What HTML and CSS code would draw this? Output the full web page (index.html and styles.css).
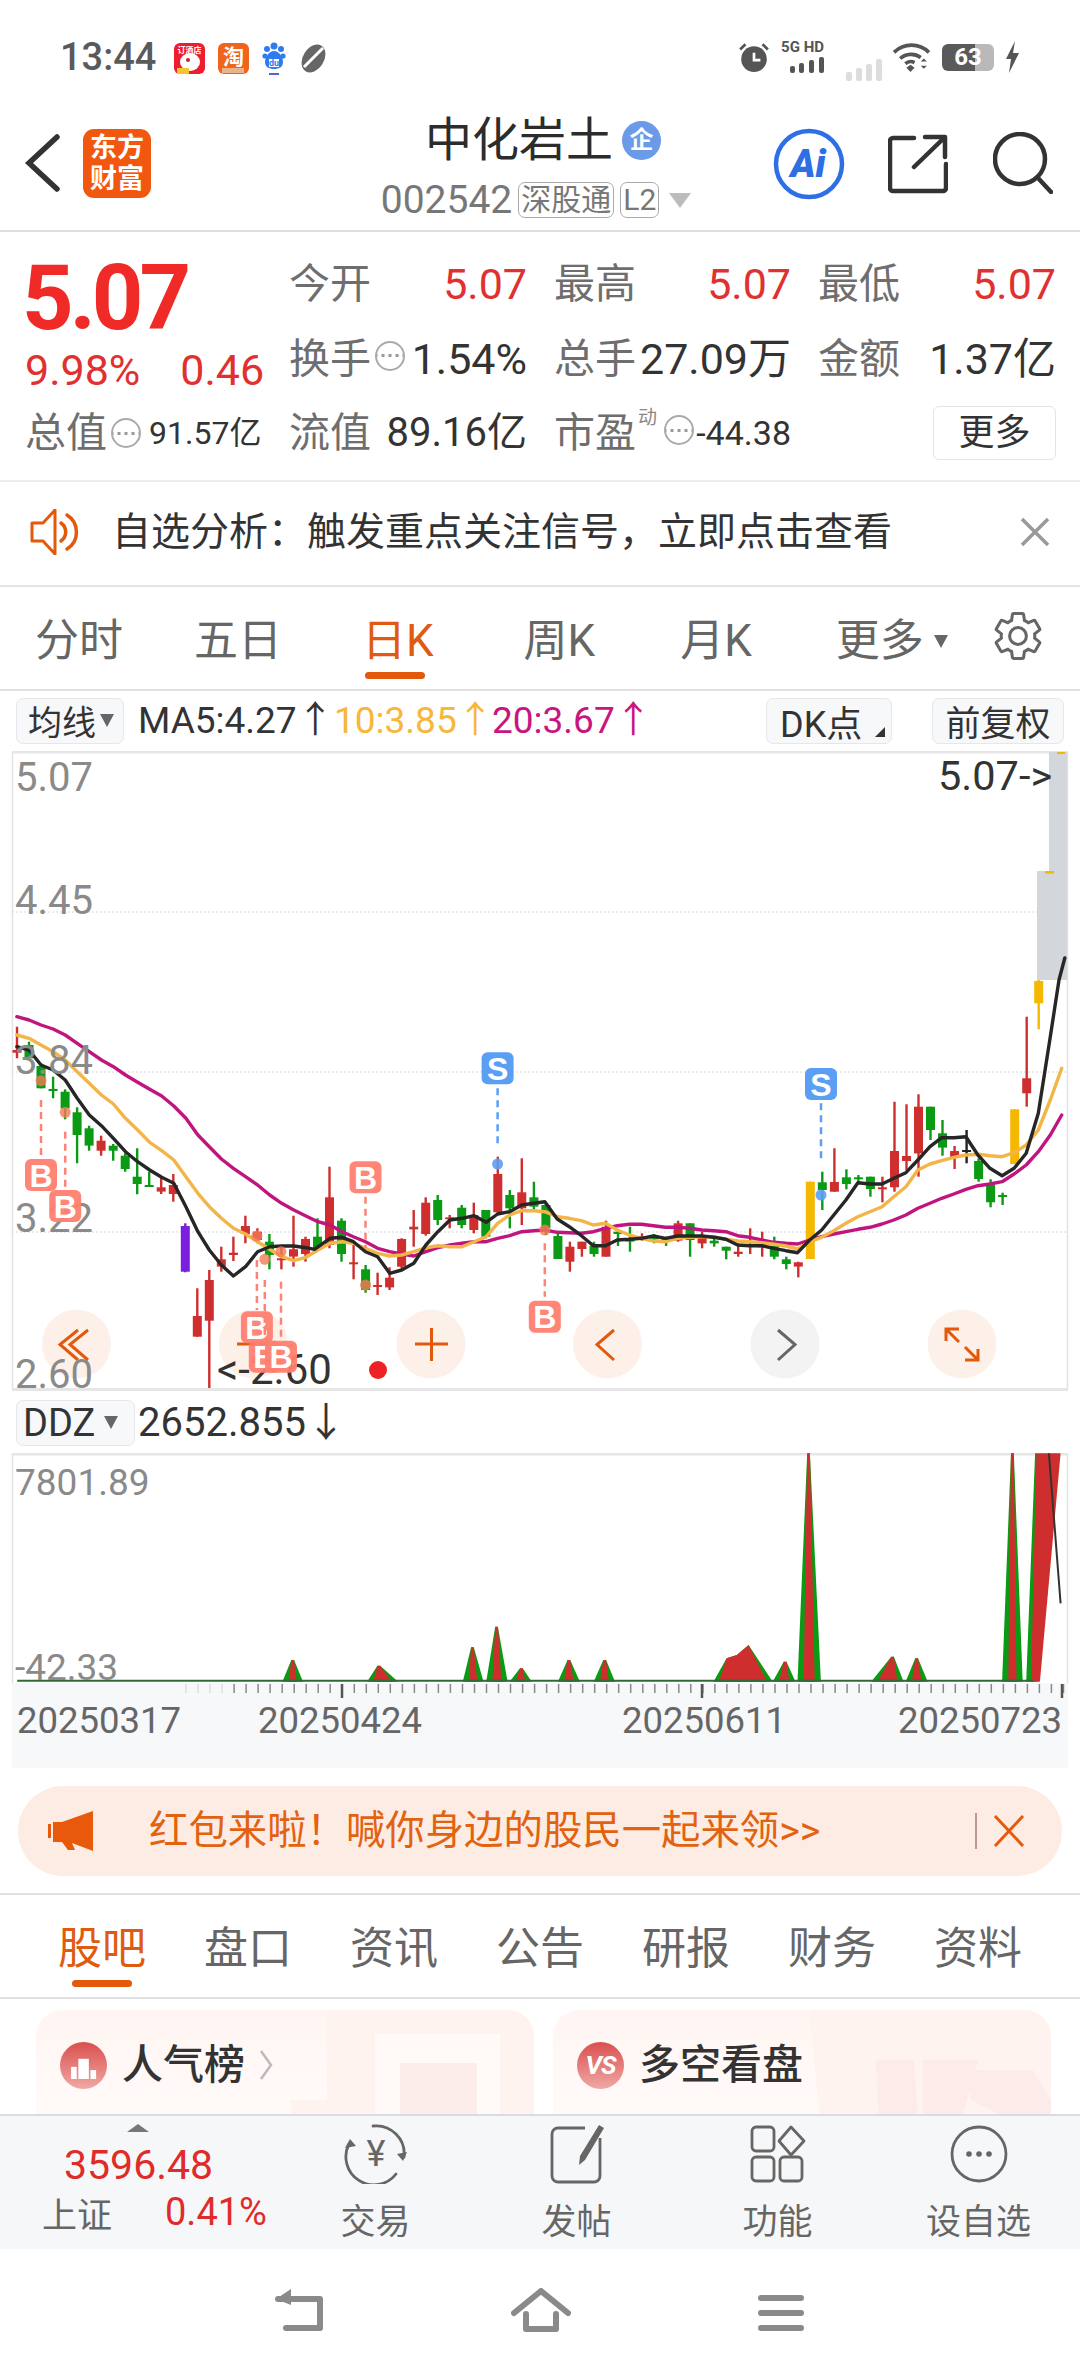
FILE: index.html
```html
<!DOCTYPE html>
<html lang="zh-CN">
<head>
<meta charset="utf-8">
<title>中化岩土</title>
<link rel="stylesheet" href="styles.css">
</head>
<body>
<div class="page">

<header class="status">
  <span class="time">13:44</span>
  <svg class="st-app" width="31" height="31" viewBox="0 0 31 31"><rect width="31" height="31" rx="6" fill="#ee1c2e"/><ellipse cx="16" cy="19" rx="10" ry="9" fill="#fff"/><circle cx="14" cy="17" r="2" fill="#c22"/><rect x="3" y="25" width="12" height="6" fill="#f7c531"/><text class="st-mini" x="15.500" y="10">订酒店</text></svg>
  <svg class="st-app" width="31" height="31" viewBox="0 0 31 31"><rect width="31" height="31" rx="6" fill="#f0641e"/><text class="st-tao" x="15.500" y="21">淘</text><rect x="4" y="25" width="22" height="5" fill="#e9b48a"/></svg>
  <svg class="st-app" width="24" height="34" viewBox="0 0 24 34"><circle cx="12" cy="4" r="3.500" fill="#2f7bf0"/><circle cx="5" cy="7" r="3" fill="#2f7bf0"/><circle cx="19" cy="7" r="3" fill="#2f7bf0"/><circle cx="3" cy="14" r="2.600" fill="#2f7bf0"/><circle cx="21" cy="14" r="2.600" fill="#2f7bf0"/><path d="M12 9c5 0 9 6 9 11s-4 7-9 7-9-2-9-7 4-11 9-11z" fill="#2f7bf0"/><path d="M7 17h10v8H7z" fill="#fff"/><text class="st-du" x="12" y="24">du</text><rect x="7" y="31" width="10" height="2" fill="#5a5fd0"/></svg>
  <svg class="st-app" width="29" height="31" viewBox="0 0 29 31"><ellipse cx="14.500" cy="15.500" rx="10.500" ry="15" fill="#666" transform="rotate(32 14.500 15.500)"/><path d="M5 24L24 5" stroke="#fff" stroke-width="3"/></svg>
  <div class="st-right">
    <svg class="st-alarm" width="32" height="30" viewBox="0 0 30 28"><circle cx="15" cy="16" r="12" fill="#555"/><path d="M15 10v7h6" stroke="#fff" stroke-width="2.500" fill="none"/><path d="M2 7l5-5M28 7l-5-5" stroke="#555" stroke-width="2.500"/></svg>
    <div class="st-net"><span class="st-hd">5G HD</span>
      <svg width="34" height="16" viewBox="0 0 34 16"><g fill="#555"><rect x="0" y="9" width="5" height="7" rx="2"/><rect x="9" y="6" width="5" height="10" rx="2"/><rect x="19" y="3" width="5" height="13" rx="2"/><rect x="29" y="0" width="5" height="16" rx="2"/></g></svg></div>
    <svg class="st-sig2" width="36" height="32" viewBox="0 0 36 32"><g fill="#ddd"><rect x="0" y="23" width="6" height="9" rx="2"/><rect x="10" y="19" width="6" height="13" rx="2"/><rect x="20" y="15" width="6" height="17" rx="2"/><rect x="30" y="10" width="6" height="22" rx="2"/></g></svg>
    <svg class="st-wifi" width="38" height="29" viewBox="0 0 37 28"><path d="M1 9a24 24 0 0 1 34 0M7 15a16 16 0 0 1 20-1M12 20a8 8 0 0 1 9-1" fill="none" stroke="#555" stroke-width="3.500"/><path d="M13 24l4-3 4 3-4 4z" fill="#555"/><path d="M27 18l3-3 3 3zM27 22l3 3 3-3z" fill="#555"/></svg>
    <div class="st-batt"><span class="st-level">63</span></div>
    <svg class="st-bolt" width="15" height="32" viewBox="0 0 15 32"><path d="M10 0L1 18h5l-2 14 10-20H8z" fill="#555"/></svg>
  </div>
</header>

<nav class="nav">
  <svg class="nav-back" width="36" height="60" viewBox="0 0 36 60"><path d="M33 4L5 30l28 26" fill="none" stroke="#333" stroke-width="5.500" stroke-linecap="round"/></svg>
  <div class="logo"><span>东方</span><span>财富</span></div>
  <div class="titlebox">
    <div class="title-row"><span class="title">中化岩土</span><span class="qi">企</span></div>
    <div class="code-row"><span class="code">002542</span><span class="tag">深股通</span><span class="tag">L2</span><i class="tri-gray"></i></div>
  </div>
  <svg class="nav-ai" width="72" height="74" viewBox="0 0 72 74"><circle cx="36" cy="37" r="33" fill="none" stroke="#2e6fe6" stroke-width="4.500"/><text class="ai-text" x="35" y="50">Ai</text></svg>
  <svg class="nav-share" width="60" height="60" viewBox="0 0 60 60"><path d="M26 4H5a3 3 0 0 0-3 3v47a3 3 0 0 0 3 3h50a3 3 0 0 0 3-3V30M26 33L56 4M37 3h20v20" fill="none" stroke="#333" stroke-width="4.500" stroke-linecap="round" stroke-linejoin="round"/></svg>
  <svg class="nav-search" width="60" height="62" viewBox="0 0 60 62"><circle cx="27" cy="27" r="25" fill="none" stroke="#333" stroke-width="4.500"/><path d="M45 46l13 14" stroke="#333" stroke-width="4.500" stroke-linecap="round"/></svg>
</nav>

<section class="quote">
  <div class="q-left">
    <div class="q-price">5.07</div>
    <div class="q-change"><span>9.98%</span><span>0.46</span></div>
    <div class="q-total"><span class="lbl">总值</span><i class="dots"></i><span class="val-s">91.57亿</span></div>
  </div>
  <div class="q-right">
    <div class="q-row">
      <div class="pair"><span class="lbl">今开</span><span class="val red">5.07</span></div>
      <div class="pair"><span class="lbl">最高</span><span class="val red">5.07</span></div>
      <div class="pair"><span class="lbl">最低</span><span class="val red">5.07</span></div>
    </div>
    <div class="q-row">
      <div class="pair"><span class="lbl">换手</span><i class="dots"></i><span class="val">1.54%</span></div>
      <div class="pair"><span class="lbl">总手</span><span class="val">27.09万</span></div>
      <div class="pair"><span class="lbl">金额</span><span class="val">1.37亿</span></div>
    </div>
    <div class="q-row">
      <div class="pair"><span class="lbl">流值</span><span class="val-m">89.16亿</span></div>
      <div class="pair"><span class="lbl">市盈</span><sup class="dong">动</sup><i class="dots"></i><span class="val-xs">-44.38</span></div>
      <div class="pair pair-more"><button class="more">更多</button></div>
    </div>
  </div>
</section>

<section class="notice">
  <svg width="50" height="46" viewBox="0 0 50 46"><path d="M13 14H2v18h11l12 13V1z" fill="none" stroke="#e2590b" stroke-width="3" stroke-linejoin="round"/><path d="M31 14a11 11 0 0 1 0 18M37 6a20 20 0 0 1 0 34" fill="none" stroke="#e2590b" stroke-width="3.500" stroke-linecap="round"/></svg>
  <span class="notice-text">自选分析：触发重点关注信号，立即点击查看</span>
  <svg class="notice-x" width="30" height="30" viewBox="0 0 30 30"><path d="M2 2l26 26M28 2L2 28" stroke="#999" stroke-width="3.500"/></svg>
</section>

<div class="ktabs">
  <span class="ktab first">分时</span>
  <span class="ktab second">五日</span>
  <span class="ktab active">日K</span>
  <span class="ktab after-active">周K</span>
  <span class="ktab">月K</span>
  <span class="ktab more-tab">更多<i class="tri-dark"></i></span>
  <svg class="gear" width="56" height="56" viewBox="0 0 24 24"><path d="M19.140 12.940c.04-.3.06-.61.06-.94 0-.32-.02-.64-.07-.94l2.030-1.580c.18-.14.23-.41.12-.61l-1.920-3.320c-.12-.22-.37-.29-.59-.22l-2.390.96c-.5-.38-1.030-.7-1.620-.94l-.36-2.540c-.04-.24-.24-.41-.48-.41h-3.840c-.24 0-.43.17-.47.41l-.36 2.540c-.59.24-1.130.57-1.620.94l-2.390-.96c-.22-.08-.47 0-.59.22L2.740 8.870c-.12.21-.08.47.12.61l2.030 1.580c-.05.3-.09.63-.09.94s.02.64.07.94l-2.030 1.580c-.18.14-.23.41-.12.61l1.920 3.320c.12.22.37.29.59.22l2.390-.96c.5.38 1.030.7 1.620.94l.36 2.540c.05.24.24.41.48.41h3.840c.24 0 .44-.17.47-.41l.36-2.540c.59-.24 1.130-.56 1.620-.94l2.390.96c.22.08.47 0 .59-.22l1.920-3.320c.12-.22.07-.47-.12-.61l-2.010-1.580zM12 15.600c-1.980 0-3.600-1.620-3.600-3.600s1.620-3.600 3.600-3.600 3.600 1.620 3.600 3.600-1.620 3.600-3.600 3.600z" fill="none" stroke="#666" stroke-width="1.300"/></svg>
</div>

<div class="ma-row">
  <button class="chip chip-ma">均线<i class="tri-dark"></i></button>
  <span class="ma ma5">MA5:4.27↑</span>
  <span class="ma ma10">10:3.85↑</span>
  <span class="ma ma20">20:3.67↑</span>
  <button class="chip chip-dk">DK点<i class="corner"></i></button>
  <button class="chip chip-fq">前复权</button>
</div>

<svg class="kline" width="1080" height="642" viewBox="0 750 1080 642">
  <rect x="12" y="751" width="1056" height="2.500" fill="#e6e6e6"/>
  <path d="M12.500 752V1390M1067.500 752V1390" stroke="#e2e2e2" stroke-width="1.500"/>
  <path d="M12 912H1068M12 1072H1068M12 1232H1068" class="grid"/>
  <g id="candles"></g>
  <g id="lines"></g>
  <rect x="12" y="1388" width="1056" height="3" fill="#e6e6e6"/>
  <circle class="cb" cx="76.500" cy="1344" r="34.500"/>
  <circle class="cb" cx="253.500" cy="1344" r="34.500"/>
  <circle class="cb" cx="431" cy="1344" r="34.500"/>
  <circle class="cb" cx="607.500" cy="1344" r="34.500"/>
  <circle class="cb gray" cx="785" cy="1344" r="34.500"/>
  <circle class="cb" cx="962" cy="1344" r="34.500"/>
  <path class="ci" d="M78 1330L60 1344.500 78 1360M88 1330L70 1344.500 88 1360"/>
  <path class="ci" d="M237 1344h33"/>
  <path class="ci" d="M415 1344h33M431.500 1328v33"/>
  <path class="ci" d="M614 1330L597 1344.500 614 1360"/>
  <path class="ci dark" d="M778 1330L795 1344.500 778 1360"/>
  <path class="ci" d="M946 1341v-12h13M946 1329l13 13M978 1349v11h-13M978 1360l-13-13"/>
  <text class="k-lab" x="15" y="791">5.07</text>
  <text class="k-lab" x="15" y="914">4.45</text>
  <text class="k-lab" x="15" y="1074">3.84</text>
  <text class="k-lab" x="15" y="1232">3.22</text>
  <text class="k-lab" x="15" y="1388">2.60</text>
  <text class="k-now" x="938" y="790">5.07-&gt;</text>
  <text class="k-low" x="217" y="1384">&lt;-2.60</text>
  <circle cx="378" cy="1370" r="9" fill="#ee2222"/>
  <g id="marks"></g>
</svg>

<div class="ddz-row">
  <button class="chip chip-ddz">DDZ<i class="tri-dark"></i></button>
  <span class="ddz-val">2652.855↓</span>
</div>

<svg class="ddz" width="1080" height="315" viewBox="0 1453 1080 315">
  <rect x="12" y="1683" width="1056" height="85" fill="#f7f8fa"/>
  <rect x="12" y="1453" width="1056" height="2.500" fill="#e6e6e6"/>
  <path d="M12.500 1453V1683M1067.500 1453V1683" stroke="#e2e2e2" stroke-width="1.500"/>
  <g id="spikes"></g>
  <g id="ticks"></g>
  <text class="d-lab" x="15" y="1495">7801.89</text>
  <text class="d-lab" x="15" y="1680">-42.33</text>
  <text class="d-date" x="17" y="1733">20250317</text>
  <text class="d-date" x="258" y="1733">20250424</text>
  <text class="d-date" x="622" y="1733">20250611</text>
  <text class="d-date" x="898" y="1733">20250723</text>
</svg>

<section class="banner">
  <svg width="46" height="40" viewBox="0 0 46 40"><path d="M0 13h3v14H0zM5 11h9L45 0v40l-21-8 3 7h-7l-6-8H5z" fill="#e8590c"/></svg>
  <span class="banner-text">红包来啦！喊你身边的股民一起来领&gt;&gt;</span>
  <i class="banner-sep"></i>
  <svg width="32" height="32" viewBox="0 0 32 32"><path d="M2 1l28 30M30 1L2 31" stroke="#e8590c" stroke-width="3"/></svg>
</section>

<div class="itabs">
  <span class="itab active">股吧</span><span class="itab">盘口</span><span class="itab">资讯</span><span class="itab">公告</span><span class="itab">研报</span><span class="itab">财务</span><span class="itab">资料</span>
</div>

<div class="cards">
  <div class="card">
    <svg class="card-art" width="498" height="140" viewBox="0 0 498 140"><path d="M291 0H498V140H255V90H291z" fill="#fff3f0"/><rect x="339" y="24" width="125" height="116" fill="#fff9f7"/><rect x="364" y="53" width="77" height="87" fill="#fcedea"/></svg>
    <div class="card-head"><i class="badge"><svg width="34" height="26" viewBox="0 0 34 26"><g fill="#fff"><rect x="1" y="11" width="7" height="15"/><rect x="10" y="1" width="13" height="25"/><rect x="25" y="15" width="7" height="11"/></g></svg></i><span class="card-title">人气榜</span><svg class="card-chev" width="14" height="32" viewBox="0 0 14 32"><path d="M2 2l10 14-10 14" fill="none" stroke="#bbb" stroke-width="2.500"/></svg></div>
  </div>
  <div class="card">
    <svg class="card-art" width="498" height="140" viewBox="0 0 498 140"><path d="M256 0H498V140H270z" fill="#fff3f0"/><path d="M323 50h38l6 90h-40zM370 50h55l-25 90h-30z" fill="#fcebe9"/><path d="M410 60h70l18 30v50h-70l30-30-40-20z" fill="#fdebe9"/></svg>
    <div class="card-head"><i class="badge vs">VS</i><span class="card-title">多空看盘</span></div>
  </div>
</div>

<footer class="tabbar">
  <div class="idx">
    <i class="idx-tri"></i>
    <div class="idx-price">3596.48</div>
    <div class="idx-row"><span class="idx-name">上证</span><span class="idx-pct">0.41%</span></div>
  </div>
  <div class="tb-item">
    <svg width="64" height="60" viewBox="0 0 64 60"><path d="M29 2A28 28 0 0 1 60 33M52 50A28 28 0 0 1 5 20" fill="none" stroke="#666" stroke-width="2.800" stroke-linecap="round"/><path d="M1 24l5-9 6 7zM63 28l-4 9-6-7z" fill="#666"/><text class="yen" x="32" y="42">¥</text></svg>
    <span>交易</span>
  </div>
  <div class="tb-item">
    <svg width="60" height="60" viewBox="0 0 60 60"><path d="M38 4H11a6 6 0 0 0-6 6v42a6 6 0 0 0 6 6h36a6 6 0 0 0 6-6V14" fill="none" stroke="#666" stroke-width="2.800"/><path d="M52 1l5 3-19 32-6 5 1-9z" fill="#666"/></svg>
    <span>发帖</span>
  </div>
  <div class="tb-item">
    <svg width="56" height="60" viewBox="0 0 56 60"><g fill="none" stroke="#666" stroke-width="2.800"><rect x="2" y="3" width="22" height="24" rx="4"/><path d="M41 3l13 14-13 14-12-14z" stroke-linejoin="round"/><rect x="2" y="33" width="22" height="24" rx="4"/><rect x="30" y="33" width="22" height="24" rx="4"/></g></svg>
    <span>功能</span>
  </div>
  <div class="tb-item">
    <svg width="60" height="60" viewBox="0 0 60 60"><circle cx="30" cy="30" r="27" fill="none" stroke="#666" stroke-width="2.800"/><g fill="#666"><circle cx="20" cy="30" r="2.800"/><circle cx="30" cy="30" r="2.800"/><circle cx="40" cy="30" r="2.800"/></g></svg>
    <span>设自选</span>
  </div>
</footer>

<div class="sysbar">
  <svg width="50" height="44" viewBox="0 0 50 44"><path d="M4 11h42v29H12" fill="none" stroke="#8a8a8a" stroke-width="6" stroke-linecap="round" stroke-linejoin="round"/><path d="M2 11L17 1v16z" fill="#8a8a8a"/></svg>
  <svg class="sys-home" width="60" height="44" viewBox="0 0 60 44"><path d="M3 25L30 3l27 22M15 26v15h30V26" fill="none" stroke="#8a8a8a" stroke-width="6" stroke-linecap="round" stroke-linejoin="round"/></svg>
  <svg class="sys-menu" width="46" height="38" viewBox="0 0 46 38"><path d="M3 4h40M3 19h40M3 34h40" stroke="#8a8a8a" stroke-width="6" stroke-linecap="round"/></svg>
</div>

</div>
<script src="chart.js"></script>
</body>
</html>
```
FILE: styles.css
```css
*{box-sizing:border-box}
html,body{margin:0;padding:0;background:#fff}
body{font-family:Roboto,"Noto Sans CJK SC",sans-serif;color:#333}
i{font-style:normal;display:block;flex:none}
svg{display:block;flex:none}
button{font:inherit;color:inherit;padding:0}
.page{width:1080px;height:2376px;overflow:hidden}

.status{height:114px;display:flex;align-items:center;padding:0 60px}
.time{font-size:38px;font-weight:500;color:#5a5a5a;width:97px;margin-right:17px;line-height:40px}
.st-app{margin-right:13px;margin-top:3px}
.st-mini{font-size:8px;fill:#fff;text-anchor:middle;font-weight:700}
.st-tao{font-size:21px;fill:#fff;text-anchor:middle;font-weight:700}
.st-du{font-size:9px;fill:#2f7bf0;text-anchor:middle;font-weight:700}
.st-right{margin-left:auto;display:flex;align-items:center;width:282px}
.st-net{margin-left:6px;width:48px;display:flex;flex-direction:column;align-items:flex-end;gap:3px}
.st-hd{font-size:15px;font-weight:700;color:#555;line-height:13px;white-space:nowrap}
.st-sig2{margin-left:22px;margin-top:16px}
.st-wifi{margin-left:11px}
.st-batt{margin-left:11px;width:52px;height:27px;border-radius:6px;background:linear-gradient(90deg,#5a5a5a 0 63%,#b9b9b9 63% 100%);display:flex;align-items:center;justify-content:center}
.st-level{font-size:24px;font-weight:700;color:#fff;line-height:27px}
.st-bolt{margin-left:11px}

.nav{height:118px;border-bottom:2px solid #dedede;display:flex;align-items:flex-start;position:relative}
.nav-back{margin:19px 0 0 24px}
.logo{margin:15px 0 0 23px;width:68px;height:69px;background:#f2570f;border-radius:11px;display:flex;flex-direction:column;align-items:center;justify-content:center;color:#fff;font-weight:700;font-size:27px;line-height:31px}
.titlebox{margin-left:189px;width:400px;display:flex;flex-direction:column;align-items:center}
.title-row{display:flex;align-items:center;height:54px;margin-top:-1px;margin-left:6px}
.title{font-size:47px;line-height:54px;color:#2c2c2c}
.qi{margin-left:9px;width:39px;height:39px;border-radius:50%;background:#6b9ae8;color:#fff;font-size:24px;line-height:39px;text-align:center;font-weight:700}
.code-row{display:flex;align-items:center;height:40px;margin-top:13px;margin-left:-8px}
.code{font-size:39px;color:#777;line-height:40px}
.tag{margin-left:6px;border:1.500px solid #aaa;border-radius:7px;font-size:30px;line-height:33px;height:36px;padding:0 2px;color:#777}
.tri-gray{margin-left:10px;width:0;height:0;border-left:11px solid transparent;border-right:11px solid transparent;border-top:15px solid #bdbdbd}
.nav-ai{margin:13px 0 0 33px}
.nav-share{margin:20px 0 0 43px}
.nav-search{margin:18px 0 0 45px}
.ai-text{font-size:38px;font-weight:900;font-style:italic;fill:#2e6fe6;text-anchor:middle}

.quote{height:250px;border-bottom:2px solid #ececec;display:flex;padding-left:25px}
.q-left{width:264px;margin-top:22px}
.q-price{font-size:90px;font-weight:700;letter-spacing:-4px;line-height:90px;color:#f02a26;height:90px;margin-left:-3px}
.q-change{display:flex;height:52px;align-items:center;gap:40px;font-size:43px;color:#e13030;line-height:52px}
.q-total{display:flex;height:74px;align-items:center}
.q-total .dots{margin:0 8px 0 4px}
.val-s{font-size:32px;color:#333;line-height:40px}
.q-right{width:767px;margin-top:15px}
.q-row{height:74.500px;display:grid;grid-template-columns:238px 237px 238px;column-gap:27px;align-items:center}
.pair{display:flex;align-items:center;position:relative;line-height:50px}
.lbl{font-size:41px;color:#6e6e6e;line-height:50px;white-space:nowrap}
.val{margin-left:auto;font-size:43px;color:#333;line-height:50px;white-space:nowrap}
.val.red{color:#e13030}
.val-m{margin-left:auto;font-size:40px;color:#333;white-space:nowrap}
.val-xs{margin-left:auto;font-size:34px;color:#333;white-space:nowrap}
.dots{width:30px;height:30px;border:2.500px solid #aaa;border-radius:50%;margin-left:4px;margin-top:-6px;position:relative;background:radial-gradient(circle,#999 1.500px,transparent 2px) center/7px 7px repeat-x}
.dong{font-size:19px;color:#888;line-height:20px;align-self:flex-start;margin:0 3px 0 2px;width:19px}
.pair-more{justify-content:flex-end}
.more{width:123px;height:54px;border:1.500px solid #e4e4e4;border-radius:6px;background:#fff;font-size:36px;line-height:50px;color:#333}

.notice{height:105px;border-bottom:2px solid #e4e4e4;display:flex;align-items:center;padding:0 30px 3px}
.notice-text{margin-left:32px;font-size:39px;color:#333;line-height:48px;white-space:nowrap}
.notice-x{margin-left:auto}

.ktabs{height:104px;border-bottom:2px solid #e0e0e0;display:flex;align-items:center;padding-top:6px}
.ktab{font-size:44px;color:#666;line-height:52px;margin-left:85px;position:relative;white-space:nowrap;display:flex;align-items:center}
.ktab.first{margin-left:35px}
.ktab.second{margin-left:71px}
.ktab.active{margin-left:80px;color:#e05a10}
.ktab.after-active{margin-left:90px}
.ktab.more-tab{margin-left:84px}
.ktab.active::after{content:"";position:absolute;left:3px;bottom:-12px;width:60px;height:7px;border-radius:4px;background:#e2590b}
.tri-dark{margin-left:10px;width:0;height:0;border-left:7px solid transparent;border-right:7px solid transparent;border-top:13px solid #666}
.gear{margin-left:auto;margin-right:34px;margin-top:-10px}

.ma-row{height:59px;display:flex;align-items:center;padding-left:16px}
.chip{height:46px;border:1.500px solid #e6e7eb;border-radius:7px;background:#f7f8fa;display:flex;align-items:center;color:#333;position:relative}
.chip-ma{width:108px;font-size:34px;padding-left:11px}
.chip-ma .tri-dark{margin-left:4px}
.ma{font-size:37px;line-height:44px;white-space:nowrap}
.ma5{margin-left:14px;color:#333;width:196px}
.ma10{color:#f6b73c;width:158px}
.ma20{color:#c8157f;width:160px}
.chip-dk{margin-left:114px;width:126px;font-size:36px;padding-left:13px}
.corner{position:absolute;right:6px;bottom:6px;width:0;height:0;border-left:10px solid transparent;border-bottom:10px solid #333}
.chip-fq{margin-left:40px;width:132px;font-size:35px;justify-content:center}

.kline{display:block}
.grid{stroke:#d8d8d8;stroke-width:1;stroke-dasharray:2 2;fill:none}
.k-lab{font-size:40px;fill:#8a8a8a}
.k-now{font-size:41.500px;fill:#333}
.k-low{font-size:42px;fill:#333}
.cb{fill:#fdf0e9}
.cb.gray{fill:#f3f3f3}
.ci{fill:none;stroke:#e2590b;stroke-width:3}
.ci.dark{stroke:#666}
.wick{stroke-width:2.400}
.up{fill:#cf2e2e;stroke:#cf2e2e}
.dn{fill:#0a9a14;stroke:#0a9a14}
.gold{fill:#f5b800;stroke:#f5b800}
.purple{fill:#7a1fe0;stroke:#7a1fe0}
.blk{fill:#222;stroke:#222}
.shade{fill:#d3d6da}
.ln{fill:none;stroke-width:3.400;stroke-linejoin:round;stroke-linecap:round}
.ln5{stroke:#262626}
.ln10{stroke:#f3b547}
.ln20{stroke:#c0157f}
.dash-b{stroke:#ff8375;stroke-width:2.500;stroke-dasharray:7 5}
.dash-s{stroke:#5b9ff5;stroke-width:2.500;stroke-dasharray:7 5}
.dot-b{fill:#f47a55;fill-opacity:.8}
.dot-s{fill:#5b9ff5;fill-opacity:.9}
.box-b{fill:#ff7f70;fill-opacity:.95}
.box-s{fill:#5b9ff5}
.mark-t{font-size:32px;font-weight:700;fill:#fff;text-anchor:middle;font-family:"Liberation Sans",sans-serif}

.ddz-row{height:61px;display:flex;align-items:center;padding-left:16px}
.chip-ddz{width:119px;height:46px;font-size:38px;padding-left:6px}
.chip-ddz .tri-dark{margin-left:9px}
.ddz-val{margin-left:3px;font-size:40px;line-height:46px;color:#333;white-space:nowrap}
.ddz{display:block}
.d-lab{font-size:37px;fill:#8a8a8a}
.d-date{font-size:36.500px;fill:#666}
.sp-g{fill:#0a9a14}
.sp-r{fill:#cf2e2e}
.base{stroke:#2d6a35;stroke-width:2;fill:none}
.thin{stroke:#333;stroke-width:2;fill:none}
.tk{stroke:#888;stroke-width:1.500}
.tk-l{stroke:#ddd;stroke-width:1.500}
.tk-m{stroke:#555;stroke-width:2.500}

.banner{margin:18px 18px 17px;height:90px;border-radius:45px;background:#fcece4;display:flex;align-items:center;padding-left:30px}
.banner-text{margin-left:55px;font-size:39.400px;color:#e2620f;line-height:48px;white-space:nowrap;width:826px}
.banner-sep{width:1.500px;height:36px;background:#b99}
.banner>svg:last-child{margin-left:16px}

.itabs{border-top:2px solid #e0e0e0;border-bottom:2px solid #e0e0e0;height:106px;display:flex;align-items:center;justify-content:space-between;padding:6px 58px 0}
.itab{font-size:44px;color:#666;line-height:52px;position:relative}
.itab.active{color:#e05a10}
.itab.active::after{content:"";position:absolute;left:14px;bottom:-12px;width:60px;height:7px;border-radius:4px;background:#e2590b}

.cards{height:115px;display:flex;gap:19px;padding:11px 29px 0 36px;overflow:hidden}
.card{width:498px;height:140px;border-radius:26px;background:linear-gradient(180deg,#fff6f3,#fffbfa);position:relative;overflow:hidden;flex:none}
.card-art{position:absolute;left:0;top:0}
.card-head{position:relative;display:flex;align-items:center;padding:30px 0 0 24px}
.badge{width:47px;height:47px;border-radius:50%;background:linear-gradient(180deg,#d9504f,#f0a8a4);display:flex;align-items:flex-end;justify-content:center;padding-bottom:10px;color:#fff}
.badge svg{width:28px;height:21px}
.badge.vs{align-items:center;padding:0;font-size:26px;font-weight:700;font-style:italic;letter-spacing:-1px}
.card-title{margin-left:15px;font-size:41px;font-weight:500;line-height:50px;color:#333}
.card-chev{margin-left:14px}

.tabbar{height:135px;border-top:2px solid #d8dce3;background:#f6f7f9;display:flex}
.idx{width:275px;padding-top:8px}
.idx-tri{margin-left:127px;width:0;height:0;border-left:11px solid transparent;border-right:11px solid transparent;border-bottom:8px solid #777}
.idx-price{margin:10px 0 0 64px;font-size:41px;line-height:46px;color:#e02b2b}
.idx-row{display:flex;align-items:center;margin:1px 0 0 42px;height:46px}
.idx-name{font-size:35px;color:#666}
.idx-pct{margin-left:53px;font-size:38px;color:#e02b2b}
.tb-item{width:201px;display:flex;flex-direction:column;align-items:center;padding-top:8px;color:#666}
.tb-item span{margin-top:16px;font-size:35px;line-height:46px}
.yen{font-size:36px;fill:#666;text-anchor:middle}

.sysbar{height:127px;background:#fff;display:flex;align-items:flex-start;padding:39px 0 0 274px}
.sys-home{margin-left:187px}
.sys-menu{margin-left:187px;margin-top:6px}
```
FILE: chart.js
```javascript
// Data read in crop units: x/2.9, 980+y/3. Second half of the series offset by 540px.
var px = function (i) { return 17 + 12.02 * i; };
var py = function (y) { return 980 + y / 3; };

// [colour class, wick top, body top, body bottom, wick bottom]
var candles = [
['up',140,210,218,235],['dn',185,195,235,240],['dn',250,258,325,325],['dn',290,327,333,355],['dn',328,335,385,418],
['dn',382,397,465,550],['dn',437,445,497,512],['up',467,482,512,527],['dn',492,497,512,542],['dn',520,527,567,575],
['dn',505,590,612,643],['dn',575,615,620,620],['up',590,622,635,642],['up',582,615,642,665],['purple',730,738,875,877],
['up',925,1008,1070,1070],['up',870,900,1022,1230],['up',800,838,860,875],['up',770,818,825,843],['up',707,738,762,790],
['up',745,755,780,790],['dn',762,785,825,868],['up',795,835,840,868],['up',707,808,830,860],['up',770,777,822,845],
['dn',715,770,810,805],['up',560,652,795,805],['dn',715,722,822,845],['up',795,847,853,898],['dn',855,868,930,938],
['up',878,915,920,945],['up',862,893,922,930],['up',775,777,860,865],['up',690,740,748,800],['up',652,668,762,767],
['dn',645,660,720,735],['up',705,712,718,745],['dn',675,683,735,745],['up',668,705,750,760],['dn',690,690,770,775],
['up',530,582,697,700],['dn',630,645,685,745],['up',535,637,685,735],['dn',605,652,680,695],
['dn',665,675,745,765],['dn',760,768,837,837],['up',785,800,845,875],['up',785,785,807,830],['dn',785,797,822,830],
['up',722,740,830,830],['dn',750,755,762,798],['dn',740,775,785,815],['up',760,770,778,782],['dn',762,770,778,790],
['dn',770,775,785,798],['up',722,730,782,785],['dn',730,730,780,830],['up',755,770,790,805],['dn',770,782,790,800],
['dn',800,800,812,838],['up',790,815,822,830],['up',745,795,800,822],['up',755,790,802,830],['dn',770,797,830,838],
['dn',830,838,852,868],['up',845,847,860,892],['gold',605,605,837,837],['dn',575,607,630,690],['up',505,606,635,635],
['dn',568,592,612,628],['dn',585,592,598,610],['dn',590,590,627,650],['up',590,622,628,667],['up',365,513,622,635],
['up',373,528,543,570],['up',343,380,520,590],['dn',380,380,450,480],['dn',420,460,503,527],['up',498,513,533,567],
['blk',450,510,515,550],['dn',535,543,597,605],['dn',598,615,667,682],['dn',638,645,650,675],['gold',388,388,552,552],
['up',110,295,340,380],['gold',0,0,70,148]
];

var l5a=[[49,200],[84,210],[119,255],[154,270],[189,300],[224,355],[259,405],[294,437],[329,475],[364,515],[399,545],[434,570],[469,592],[504,610],[539,680],[574,755],[607,810],[642,855],[677,888],[712,860],[747,815],[782,800],[817,798],[852,798],[887,803],[912,808],[957,775],[992,772],[1025,785],[1060,815],[1095,830],[1130,880],[1165,870],[1200,850],[1235,795],[1270,755],[1305,720],[1340,715],[1375,707],[1410,727],[1443,702],[1478,695],[1513,675],[1548,670]];
var l5b=[[14,665],[50,717],[85,740],[120,767],[155,797],[190,797],[224,780],[259,778],[294,775],[329,768],[364,775],[399,768],[434,768],[469,768],[504,772],[539,778],[573,795],[608,797],[643,797],[678,805],[713,812],[747,818],[782,780],[817,750],[852,705],[887,660],[922,608],[957,612],[992,612],[1026,595],[1061,578],[1096,540],[1131,500],[1165,473],[1200,473],[1235,470],[1270,525],[1305,565],[1340,587],[1375,565],[1410,520],[1445,400],[1480,170],[1505,0],[1522,-66]];
var l10a=[[49,165],[84,175],[119,195],[154,215],[189,240],[224,275],[259,310],[294,345],[329,372],[364,415],[399,450],[434,487],[469,512],[504,540],[539,590],[574,640],[607,680],[642,715],[677,745],[712,762],[747,785],[782,808],[817,830],[852,842],[887,832],[922,810],[957,790],[992,785],[1025,790],[1060,805],[1095,820],[1130,828],[1165,825],[1200,815],[1235,803],[1270,797],[1305,800],[1340,800],[1375,785],[1410,770],[1443,730],[1478,705],[1513,692],[1548,692]];
var l10b=[[14,695],[50,710],[85,715],[120,722],[155,735],[190,730],[224,750],[259,765],[294,775],[329,783],[364,785],[399,775],[434,772],[469,770],[504,770],[539,778],[573,783],[608,785],[643,788],[678,793],[713,798],[747,807],[782,785],[817,772],[852,752],[887,730],[922,710],[957,695],[992,680],[1026,650],[1061,620],[1096,570],[1131,552],[1165,542],[1200,532],[1235,525],[1270,523],[1305,527],[1340,530],[1375,518],[1410,495],[1445,450],[1480,360],[1513,265]];
var l20a=[[49,110],[84,120],[119,135],[154,147],[189,165],[224,190],[259,215],[294,240],[329,260],[364,285],[399,307],[434,328],[469,348],[504,378],[539,415],[574,465],[607,500],[642,537],[677,565],[712,590],[747,615],[782,645],[817,670],[852,690],[887,708],[922,725],[957,735],[992,755],[1025,770],[1060,785],[1095,805],[1130,815],[1165,822],[1200,828],[1235,815],[1270,803],[1305,795],[1340,790],[1375,785],[1410,785],[1443,775],[1478,767],[1513,755],[1548,752]];
var l20b=[[14,750],[50,757],[85,758],[120,760],[155,755],[190,745],[224,737],[259,733],[294,733],[329,737],[364,742],[399,742],[434,745],[469,750],[504,752],[539,755],[573,767],[608,772],[643,780],[678,787],[713,790],[747,792],[782,780],[817,770],[852,762],[887,755],[922,748],[957,742],[992,732],[1026,720],[1061,705],[1096,685],[1131,670],[1165,655],[1200,642],[1235,628],[1270,617],[1305,612],[1340,605],[1375,582],[1410,555],[1445,515],[1480,465],[1513,405]];

function pts(a, b) {
  var out = a.map(function (p) { return (p[0] / 2.9).toFixed(1) + ',' + py(p[1]).toFixed(1); });
  return out.concat(b.map(function (p) { return (540 + p[0] / 2.9).toFixed(1) + ',' + py(p[1]).toFixed(1); })).join(' ');
}

var h = '';
// grey limit-up columns
h += '<rect class="shade" x="1049" y="752" width="18" height="120"/><rect class="shade" x="1037" y="871" width="30" height="109"/>';
candles.forEach(function (c, i) {
  var x = px(i);
  h += '<path class="' + c[0] + ' wick" d="M' + x.toFixed(1) + ' ' + py(c[1]).toFixed(1) + 'V' + py(c[4]).toFixed(1) + '"/>';
  var top = i === 85 ? 981 : py(c[2]);
  h += '<rect class="' + c[0] + '" stroke-width="0" x="' + (x - 4.5).toFixed(1) + '" y="' + top.toFixed(1) + '" width="9" height="' + Math.max(py(c[3]) - top, 2).toFixed(1) + '"/>';
});
h += '<rect class="gold" stroke-width="0" x="1045" y="871" width="9" height="2.500"/><rect class="gold" stroke-width="0" x="1057" y="752" width="8" height="2"/>';
document.getElementById('candles').innerHTML = h;

document.getElementById('lines').innerHTML =
  '<polyline class="ln ln20" points="' + pts(l20a, l20b) + '"/>' +
  '<polyline class="ln ln10" points="' + pts(l10a, l10b) + '"/>' +
  '<polyline class="ln ln5" points="' + pts(l5a, l5b) + '"/>';

// [kind, x(px), badge centre, dash top, dash bottom, dot] in crop units for y
var marks = [
['B',119/2.9,585,360,530,302],['B',189/2.9,678,455,620,397],['B',1060/2.9,592,650,805,915],
['B',745/2.9,1042,840,990,768],['B',768/2.9,1130,900,1075,838],['B',815/2.9,1130,905,1075,815],
['B',540+14/2.9,1010,790,950,750],['S',1443/2.9,265,325,490,552],['S',540+815/2.9,312,370,535,645]
];
var m = '';
marks.forEach(function (k) {
  var s = k[0] === 'S' ? 's' : 'b', x = k[1].toFixed(1), y = py(k[2]);
  m += '<path class="dash-' + s + '" d="M' + x + ' ' + py(k[3]).toFixed(1) + 'V' + py(k[4]).toFixed(1) + '"/>';
  m += '<circle class="dot-' + s + '" cx="' + x + '" cy="' + py(k[5]).toFixed(1) + '" r="5.500"/>';
  m += '<rect class="box-' + s + '" x="' + (k[1] - 16).toFixed(1) + '" y="' + (y - 16).toFixed(1) + '" width="32" height="32" rx="6"/>';
  m += '<text class="mark-t" x="' + x + '" y="' + (y + 11.5).toFixed(1) + '">' + k[0] + '</text>';
});
document.getElementById('marks').innerHTML = m;

// DDZ spikes: crop units x/1.452, 1400+y/3
var qx = function (x) { return (x / 1.452).toFixed(1); };
var qy = function (y) { return (1400 + y / 3).toFixed(1); };
function poly(cls, arr) {
  return '<polygon class="' + cls + '" points="' + arr.map(function (p) { return qx(p[0]) + ',' + qy(p[1]); }).join(' ') + '"/>';
}
var base = 845;
var sp = [[410,425,440,780],[533,550,578,797],[672,686,702,742],[706,721,737,680],[740,757,772,805],[810,826,842,780],[862,878,893,780],[1122,1140,1155,785],[1158,1174,1192,160],[1265,1296,1312,770],[1315,1331,1347,775],[1455,1470,1485,160]];
var s = '';
sp.forEach(function (a) {
  s += poly('sp-g', [[a[0], base], [a[1] - 2, a[3]], [a[1] + 2, a[3]], [a[2], base]]);
  s += poly('sp-r', [[a[0] + 9, base], [a[1] - 2, a[3]], [a[1] + 2, a[3]], [a[2] - 9, base]]);
});
s += poly('sp-g', [[1036, base], [1055, 775], [1070, 765], [1087, 735], [1122, base]]);
s += poly('sp-r', [[1044, base], [1055, 775], [1070, 765], [1087, 735], [1114, base]]);
s += poly('sp-g', [[1490, base], [1503, 160], [1506, 160], [1506, base]]);
s += poly('sp-r', [[1497, base], [1505, 160], [1540, 160], [1510, base]]);
s += '<path class="base" d="M' + qx(25) + ' ' + qy(842) + 'H' + qx(1500) + '"/>';
s += '<path class="thin" d="M' + qx(1523) + ' ' + qy(160) + 'L' + qx(1540) + ' ' + qy(610) + '"/>';
document.getElementById('spikes').innerHTML = s;

var t = '';
for (var k = 0; k <= 73; k++) {
  var tx = 186 + k * 12.02;
  t += '<path class="' + (k < 4 ? 'tk-l' : 'tk') + '" d="M' + tx.toFixed(1) + ' 1684V1693"/>';
}
[342, 702, 1062].forEach(function (x) { t += '<path class="tk-m" d="M' + x + ' 1684V1698"/>'; });
document.getElementById('ticks').innerHTML = t;
```
